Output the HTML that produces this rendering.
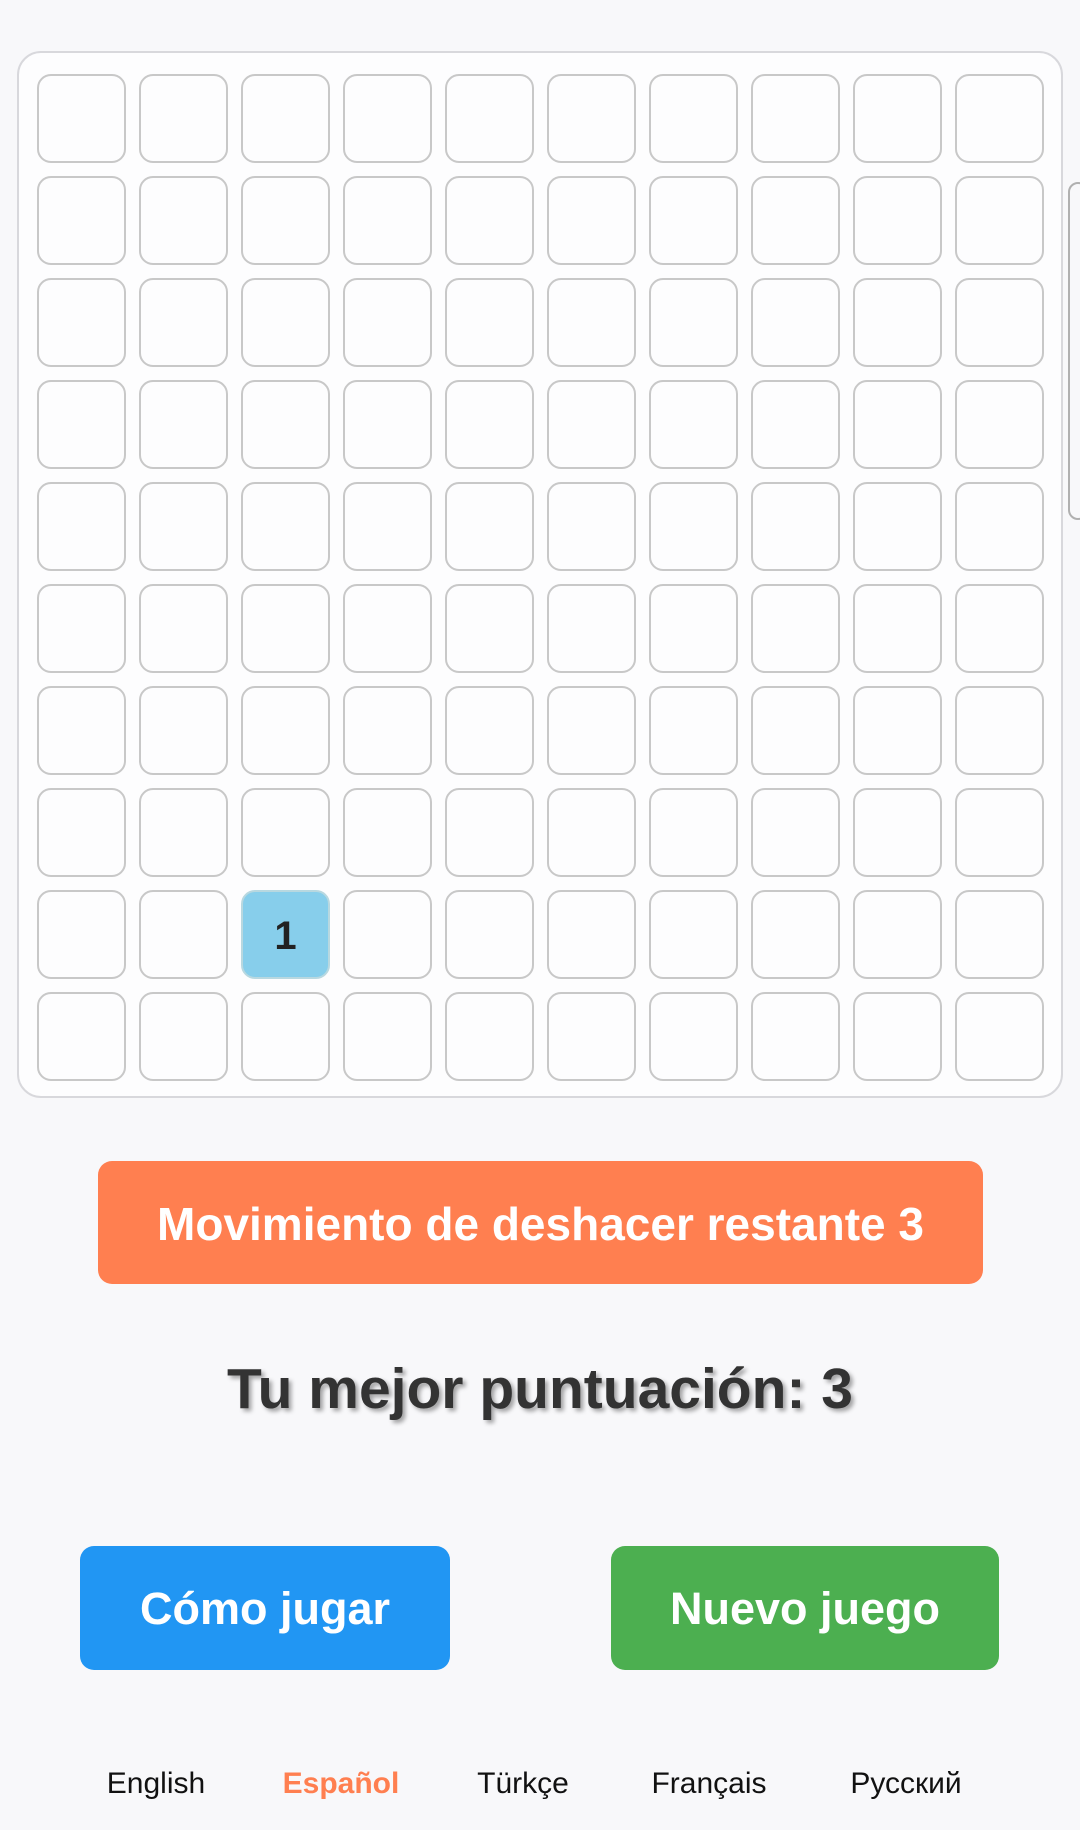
<!DOCTYPE html>
<html><head><meta charset="utf-8"><style>
*{margin:0;padding:0;box-sizing:border-box}
body{width:1080px;height:1830px;background:#f8f8fa;font-family:"Liberation Sans",Arial,sans-serif;position:relative;overflow:hidden}
.board{position:absolute;left:17px;top:51px;width:1046px;height:1047px;background:#fdfdfe;border:2px solid #d8d8dc;border-radius:24px}
.cell{position:absolute;width:89px;height:89px;border:2.5px solid #c8c8c8;border-radius:14px;background:#fdfdfe}
.one{background:#87ceeb;border-color:#b8d8e0;font-weight:bold;font-size:40px;color:#222;text-align:center;line-height:88px}
.sb{position:absolute;left:1068px;top:182px;width:20px;height:338px;border:2px solid #b0b0b0;border-radius:10px}
.btn{position:absolute;color:#fff;font-weight:bold;text-align:center;border-radius:14px}
.lang{position:absolute;top:1767px;font-size:30px;color:#111;transform:translateX(-50%);white-space:nowrap}
</style></head><body>
<div class="sb"></div>
<div class="board"></div>
<div id="g"></div>
<div class="btn" style="left:98px;top:1161px;width:885px;height:123px;background:#ff7f50;font-size:46px;line-height:126px">Movimiento de deshacer restante 3</div>
<div style="position:absolute;left:0;width:1080px;top:1356px;text-align:center;font-weight:bold;font-size:57px;color:#333;text-shadow:3px 3px 4px rgba(0,0,0,0.35)">Tu mejor puntuación: 3</div>
<div class="btn" style="left:80px;top:1546px;width:370px;height:124px;background:#2196f3;font-size:45px;line-height:126px">Cómo jugar</div>
<div class="btn" style="left:611px;top:1546px;width:388px;height:124px;background:#4caf50;font-size:45px;line-height:126px">Nuevo juego</div>
<div class="lang" style="left:156px">English</div>
<div class="lang" style="left:341px;color:#ff7f50;font-weight:bold">Español</div>
<div class="lang" style="left:523px">Türkçe</div>
<div class="lang" style="left:709px">Français</div>
<div class="lang" style="left:906px">Русский</div>
<script>
var g=document.getElementById('g'),h='';
for(var r=0;r<10;r++)for(var c=0;c<10;c++){
var one=(r==8&&c==2);
h+='<div class="cell'+(one?' one':'')+'" style="left:'+(37+c*102)+'px;top:'+(74+r*102)+'px">'+(one?'1':'')+'</div>';}
g.innerHTML=h;
</script>
</body></html>
